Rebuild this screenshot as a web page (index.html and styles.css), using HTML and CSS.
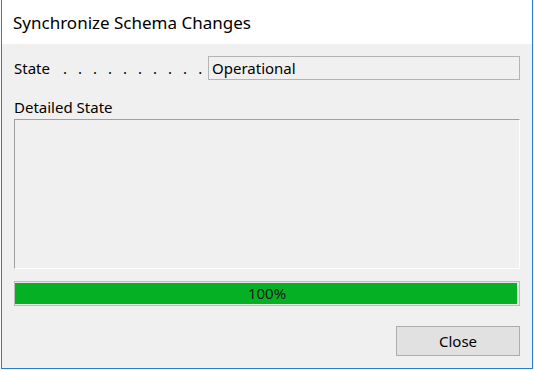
FILE: index.html
```html
<!DOCTYPE html>
<html lang="en">

<head>
    <meta charset="UTF-8">
    <meta name="viewport" content="width=device-width, initial-scale=1.0">
    <title>Synchronize Schema Changes</title>
    <link rel="stylesheet" href="styles.css">
</head>

<body>
    <div class="dialog">
        <div class="titlebar">Synchronize Schema Changes</div>

        <div class="content">
            <div class="state-row">
                <div class="state-label">
                    <span>State</span>
                    <span class="dots">..........</span>
                </div>
                <div class="field">Operational</div>
            </div>

            <div class="section-label">Detailed State</div>
            <div class="details"></div>

            <div class="progress">
                <div class="progress-fill" style="width: 100%;"></div>
                <span class="progress-text">100%</span>
            </div>

            <div class="actions">
                <button class="btn">Close</button>
            </div>
        </div>
    </div>
</body>

</html>
```

FILE: styles.css
```css
body {
    font-family: "Noto Sans", "Open Sans", sans-serif;
    font-size: 15px;
    margin: 0;
    padding: 0;
    background-color: #fafafa;
    color: #000;
}

.dialog {
    width: 532px;
    margin-left: 1px;
    box-sizing: border-box;
    border: 1px solid #1883d7;
    border-top: none;
    background: #f0f0f0;
}

.titlebar {
    height: 44px;
    box-sizing: border-box;
    padding: 11px 0 0 11px;
    line-height: 24px;
    font-size: 17px;
    background: #fff;
}

.content {
    padding: 12px 12px 12px 12px;
}

.state-row {
    display: flex;
    height: 24px;
    align-items: center;
}

.state-label {
    width: 194px;
    line-height: 24px;
    display: flex;
}

.dots {
    margin-left: 13px;
    letter-spacing: 11px;
}

.field {
    flex: 1;
    height: 24px;
    box-sizing: border-box;
    border: 1px solid #b4b4b4;
    padding-left: 3px;
    line-height: 22px;
}

.section-label {
    margin-top: 17px;
    line-height: 20px;
}

.details {
    margin-top: 2px;
    height: 150px;
    box-sizing: border-box;
    border: 1px solid #fff;
    border-top-color: #a0a0a0;
    border-left-color: #a0a0a0;
}

.progress {
    position: relative;
    margin-top: 12px;
    height: 25px;
    box-sizing: border-box;
    border: 1px solid #bcbcbc;
    padding: 1px;
    background: #e6e6e6;
}

.progress-fill {
    height: 100%;
    background: #06b025;
    margin-left: -1px;
}

.progress-text {
    position: absolute;
    left: 0;
    right: 0;
    top: 0;
    text-align: center;
    line-height: 23px;
    color: #1a1a1a;
}

.actions {
    margin-top: 20px;
    display: flex;
    justify-content: flex-end;
}

.btn {
    width: 124px;
    height: 30px;
    background: #e1e1e1;
    border: 1px solid #adadad;
    font-family: inherit;
    font-size: 15px;
    color: #000;
    padding: 0;
}
```
